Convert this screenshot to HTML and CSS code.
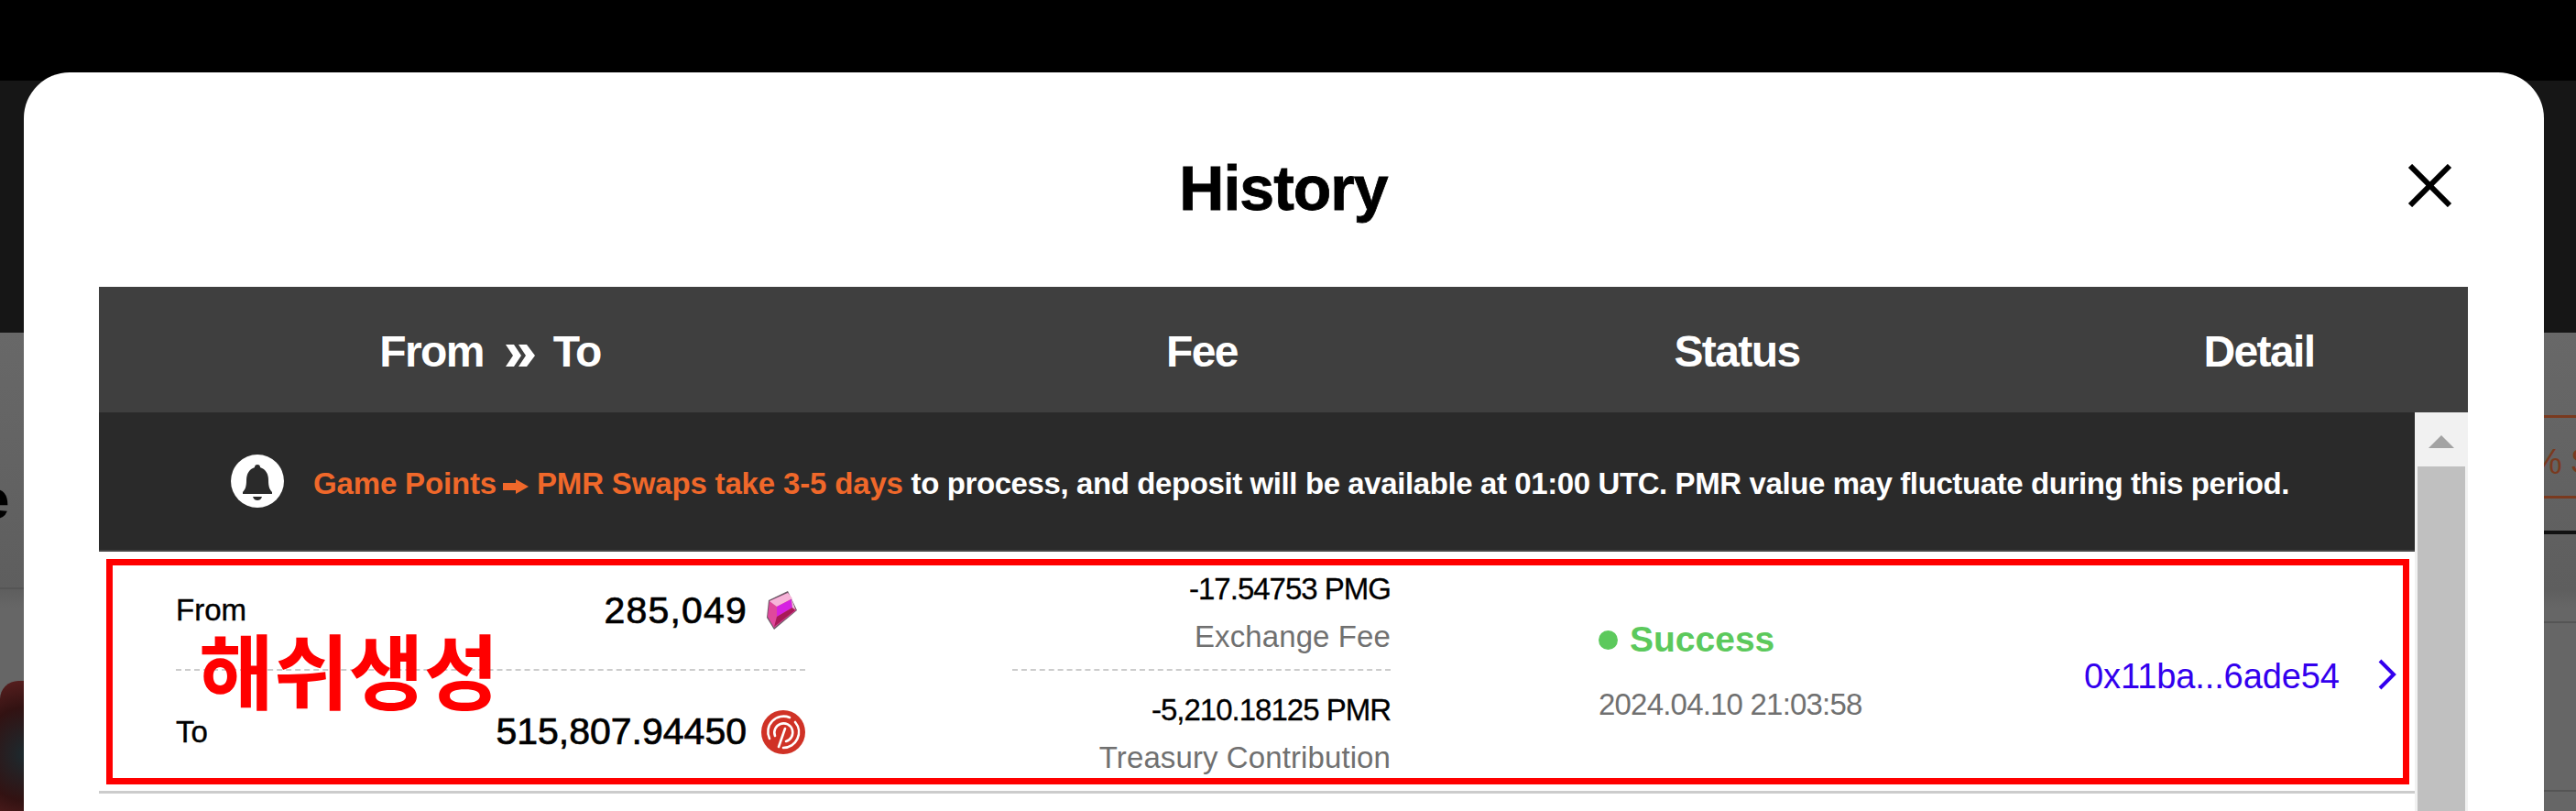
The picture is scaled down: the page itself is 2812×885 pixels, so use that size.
FILE: index.html
```html
<!DOCTYPE html>
<html lang="en">
<head>
  <meta charset="UTF-8">
  <meta name="viewport" content="width=device-width, initial-scale=1.0">
  <title>History</title>
  <link rel="stylesheet" href="styles.css">
</head>
<body>
  <!-- dimmed page behind the modal -->
  <div class="backdrop">
    <div class="top-bar"></div>
    <div class="dark-band"></div>
    <div class="page-rest">
      <div class="side-left">
        <span class="side-letter">e</span>
        <div class="side-thumb"></div>
      </div>
      <div class="side-right">
        <span class="side-pct">% $</span>
      </div>
    </div>
  </div>

  <div class="modal">
    <div class="modal-head">
      <h1>History</h1>
      <svg class="close" viewBox="0 0 49 47"><path d="M3 2 46 45M46 2 3 45" /></svg>
    </div>

    <div class="table-head">
      <div class="th th-swap">From
        <svg class="th-arrows" viewBox="0 0 32 24"><path d="M0 0h9l8 12-8 12H0l8-12zM14 0h9l9 12-9 12h-9l8-12z" /></svg>
        To</div>
      <div class="th th-fee">Fee</div>
      <div class="th th-status">Status</div>
      <div class="th th-detail">Detail</div>
    </div>

    <div class="table-body">
      <div class="list">
        <div class="notice">
          <span class="bell">
            <svg viewBox="0 0 58 58">
              <path d="M29 11c-2 0-3 1-3 3-6 2-9 7-9 14 0 6-1 10-4 13v2h32v-2c-3-3-4-7-4-13 0-7-3-12-9-14 0-2-1-3-3-3zM24 46h10c-1 3-3 4-5 4s-4-1-5-4z" />
            </svg>
          </span>
          <p class="notice-text"><span class="orange">Game Points<svg class="notice-arrow" viewBox="0 0 28 16"><path d="M0 4h14V0l14 8-14 8v-4H0z" /></svg>PMR Swaps take 3-5 days</span> to process, and deposit will be available at 01:00 UTC. PMR value may fluctuate during this period.</p>
        </div>

        <div class="row">
          <div class="col-swap">
            <div class="swap-line swap-from">
              <span class="swap-label">From</span>
              <span class="swap-amount">285,049</span>
              <svg class="gem" viewBox="0 0 33 42">
                <path d="M2 10 23 0l10 21-25 21-8-13z" fill="#6b5a66" />
                <path d="M3 11 23 2l9 19-24 19-7-12z" fill="#e0489c" />
                <path d="M3 11 23 2l5 6-17 9z" fill="#f7b4d9" />
                <path d="M11 17 27 9l1 9-17 10z" fill="#d522e2" />
                <path d="M11 28 28 18l3 3-23 18z" fill="#a81a58" />
                <path d="M27 8l4 12-3-2z" fill="#e8c4d8" />
              </svg>
            </div>
            <div class="swap-line swap-to">
              <span class="swap-label">To</span>
              <span class="swap-amount">515,807.94450</span>
              <svg class="pmr" viewBox="0 0 48 48">
                <circle cx="24" cy="24" r="24" fill="#d03226" />
                <g fill="none" stroke="#fff" stroke-width="2.6" stroke-linecap="round">
                  <path d="M9 31a17 17 0 0 1 22-23" />
                  <path d="M37 13a17 17 0 0 1-13 28" />
                  <path d="M15 28a10 10 0 1 1 12 6" />
                  <path d="M26 20l-7 20" />
                </g>
              </svg>
            </div>
          </div>

          <div class="col-fee">
            <div class="fee-block">
              <span class="fee-value">-17.54753 PMG</span>
              <span class="fee-label">Exchange Fee</span>
            </div>
            <div class="fee-block fee-block-last">
              <span class="fee-value">-5,210.18125 PMR</span>
              <span class="fee-label">Treasury Contribution</span>
            </div>
          </div>

          <div class="col-status">
            <div class="status"><span class="status-dot"></span>Success</div>
            <div class="status-date">2024.04.10 21:03:58</div>
          </div>

          <div class="col-detail">
            <span class="hash">0x11ba...6ade54</span>
            <svg class="chevron" viewBox="0 0 21 34"><path d="M3 2 18 17 3 32" /></svg>
          </div>
        </div>
      </div>

      <div class="scrollbar">
        <div class="scroll-btn"><span class="scroll-up"></span></div>
        <div class="scroll-thumb"></div>
      </div>
    </div>

    <!-- annotation drawn over the screenshot -->
    <div class="mark-box"></div>
    <div class="mark-text">해쉬생성</div>
  </div>
</body>
</html>
```

FILE: styles.css
```css
* {
  box-sizing: border-box;
}

html, body {
  height: 885px;
}

body {
  margin: 0;
  overflow: hidden;
  background-color: #666;
  font-family: "Liberation Sans", "Noto Sans CJK KR", sans-serif;
  color: #000;
}

/* page behind the modal */
.backdrop {
  height: 885px;
  display: flex;
  flex-direction: column;
}

.top-bar {
  height: 88px;
  background-color: #000;
}

.dark-band {
  height: 275px;
  background-color: #161616;
}

.page-rest {
  flex: 1;
  display: flex;
  justify-content: space-between;
  background: linear-gradient(#686868, #5e5e5e 280px, #666 300px);
}

.side-left {
  width: 26px;
  padding-top: 140px;
  overflow: hidden;
}

.side-letter {
  display: block;
  height: 140px;
  margin-left: -24px;
  border-bottom: 2px solid #555;
  font-size: 62px;
  font-weight: 700;
  line-height: 84px;
}

.side-thumb {
  height: 142px;
  margin-top: 100px;
  background: radial-gradient(circle at 30px 80px, #1b2b30, #321212 60%, #5a2020);
  border-top-left-radius: 20px;
}

.side-right {
  width: 35px;
  margin-top: 90px;
  height: 425px;
  border-top: 3px solid #7a3a1f;
  overflow: hidden;
  background:
    linear-gradient(#7a3a1f, #7a3a1f) 0 85px / 100% 3px no-repeat,
    linear-gradient(#111, #111) 0 123px / 100% 4px no-repeat,
    linear-gradient(#555, #555) 0 222px / 100% 2px no-repeat,
    linear-gradient(#555, #555) 0 406px / 100% 2px no-repeat;
}

.side-pct {
  display: block;
  margin: 28px 0 0 -14px;
  font-size: 38px;
  line-height: 40px;
  white-space: nowrap;
  color: #7a3a1f;
}

/* modal */
.modal {
  position: absolute;
  left: 26px;
  top: 79px;
  width: 2751px;
  height: 806px;
  padding: 0 83px 0 82px;
  background-color: #fff;
  border-radius: 50px 50px 0 0;
}

.modal-head {
  position: relative;
  height: 234px;
  display: flex;
  align-items: center;
  justify-content: center;
}

.modal-head h1 {
  margin: 18px 0 0;
  font-size: 68px;
  font-weight: 700;
  letter-spacing: -1px;
  line-height: 1;
  -webkit-text-stroke: 0.8px #000;
}

.close {
  position: absolute;
  left: 2520px;
  top: 100px;
  width: 49px;
  height: 47px;
  fill: none;
  stroke: #000;
  stroke-width: 6;
}

.table-head {
  display: flex;
  height: 137px;
  background-color: #3f3f3f;
  color: #fff;
}

.th {
  display: flex;
  align-items: center;
  justify-content: center;
  font-size: 48px;
  font-weight: 700;
  letter-spacing: -1.6px;
  padding-top: 4px;
}

.th-swap { width: 854px; }
.th-fee { width: 700px; }
.th-status { width: 468px; }
.th-detail { width: 564px; padding-left: 108px; }

.th-arrows {
  width: 32px;
  height: 24px;
  margin: 8px 20px 0 24px;
  fill: #fff;
}

.table-body {
  display: flex;
  height: 435px;
}

.list {
  width: 2528px;
}

.notice {
  height: 152px;
  display: flex;
  align-items: center;
  padding-left: 144px;
  background-color: #2a2a2a;
  border-bottom: 2px solid #444;
  color: #fff;
}

.bell {
  width: 58px;
  height: 58px;
  margin-right: 32px;
  border-radius: 50%;
  background-color: #fff;
}

.bell svg {
  display: block;
  fill: #2a2a2a;
}

.notice-text {
  margin: 6px 0 0;
  font-size: 33px;
  font-weight: 700;
  letter-spacing: -0.4px;
  white-space: nowrap;
}

.orange {
  letter-spacing: -0.16px;
  color: #f0682a;
}

.notice-arrow {
  width: 28px;
  height: 16px;
  margin: 0 9px 0 7px;
  fill: #f0682a;
}

.row {
  height: 264px;
  display: flex;
  padding-left: 84px;
  border-bottom: 3px solid #ccc;
}

.col-swap {
  width: 687px;
}

.swap-line {
  height: 130px;
  display: flex;
  align-items: center;
}

.swap-from {
  border-bottom: 2px dashed #ccc;
}

.swap-to {
  padding-top: 3px;
}

.swap-label {
  margin-right: auto;
  font-size: 33px;
  -webkit-text-stroke: 0.4px #000;
}

.swap-amount {
  font-size: 41px;
  -webkit-text-stroke: 0.7px #000;
}

.swap-from .swap-amount {
  letter-spacing: 1.2px;
}

.gem {
  width: 33px;
  height: 42px;
  margin: 0 9px 0 21px;
}

.pmr {
  width: 48px;
  height: 48px;
  margin-left: 16px;
}

.col-fee {
  width: 413px;
  margin-left: 226px;
}

.fee-block {
  height: 130px;
  display: flex;
  flex-direction: column;
  align-items: flex-end;
  gap: 14px;
  padding-top: 22px;
  border-bottom: 2px dashed #ccc;
}

.fee-block-last {
  padding-top: 24px;
  border-bottom: 0;
}

.fee-value {
  font-size: 33px;
  line-height: 38px;
  letter-spacing: -1px;
  -webkit-text-stroke: 0.3px #000;
}

.fee-label {
  font-size: 33px;
  line-height: 38px;
  letter-spacing: 0.1px;
  color: #707070;
}

.col-status {
  width: 530px;
  margin-left: 227px;
  padding-top: 74px;
}

.status {
  display: flex;
  align-items: center;
  font-size: 39px;
  font-weight: 700;
  color: #5cc95c;
}

.status-dot {
  width: 21px;
  height: 21px;
  margin-right: 13px;
  border-radius: 50%;
  background-color: #5cc95c;
}

.status-date {
  margin-top: 30px;
  font-size: 33px;
  letter-spacing: -0.8px;
  color: #707070;
}

.col-detail {
  display: flex;
  align-items: center;
  height: 240px;
  padding-top: 28px;
}

.hash {
  margin-top: 4px;
  font-size: 38px;
  letter-spacing: -0.1px;
  color: #3300ee;
}

.chevron {
  width: 21px;
  height: 34px;
  margin-left: 41px;
  fill: none;
  stroke: #3300ee;
  stroke-width: 4;
}

.scrollbar {
  width: 58px;
  display: flex;
  flex-direction: column;
  background-color: #f1f1f1;
  border-left: 3px solid #f1f1f1;
  border-right: 3px solid #f1f1f1;
}

.scroll-btn {
  height: 59px;
  padding-top: 25px;
  display: flex;
  justify-content: center;
}

.scroll-up {
  width: 0;
  height: 0;
  border-left: 14px solid transparent;
  border-right: 14px solid transparent;
  border-bottom: 14px solid #a3a3a3;
}

.scroll-thumb {
  flex: 1;
  background-color: #c0c0c0;
}

/* red annotation */
.mark-box {
  position: absolute;
  left: 90px;
  top: 531px;
  width: 2514px;
  height: 246px;
  border: 7px solid #f00;
}

.mark-text {
  position: absolute;
  left: 191px;
  top: 600px;
  font-family: "Noto Sans CJK KR", sans-serif;
  font-size: 89px;
  font-weight: 700;
  line-height: 100px;
  color: #f00;
  white-space: nowrap;
}
```
